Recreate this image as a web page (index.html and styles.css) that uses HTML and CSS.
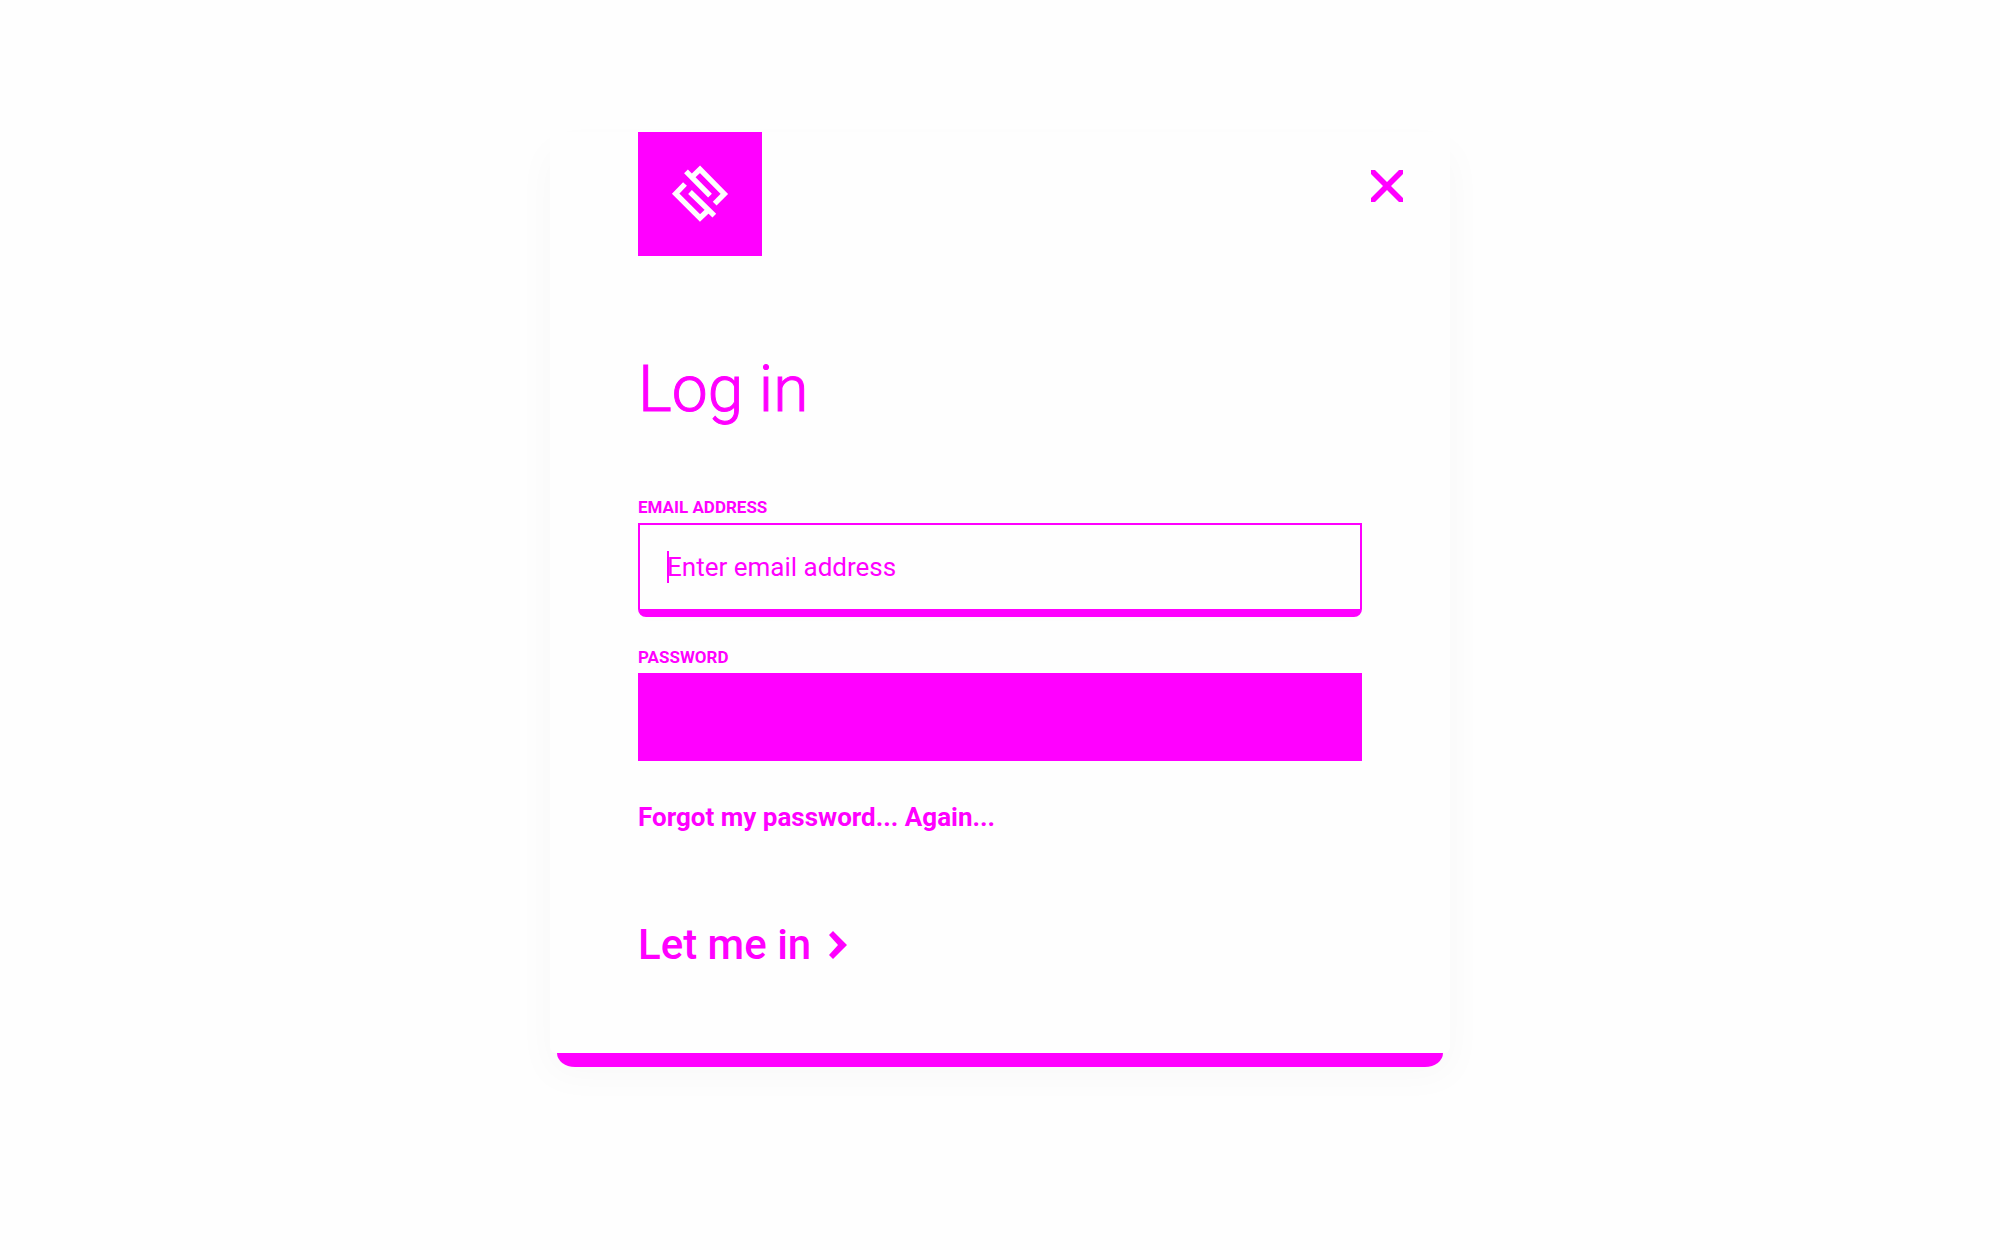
FILE: index.html
```html
<!DOCTYPE html>
<html lang="en">
<head>
<meta charset="utf-8">
<meta name="viewport" content="width=device-width, initial-scale=1">
<title>Log in</title>
<link rel="stylesheet" href="styles.css">
</head>
<body>
<main class="dialog">
  <div class="card">
    <header class="card-header">
      <svg class="logo" viewBox="0 0 372 372" role="img" aria-label="Logo">
        <path d="M144 118 216 191M164 133 186 112 259 186 230 215M156 180 229 251M141 156 113 185 186 258 208 237" fill="none" stroke="currentColor" stroke-width="16"/>
      </svg>
      <button class="close" type="button" aria-label="Close">
        <svg viewBox="0 0 32 32" width="32" height="32"><path d="M0 0H4L16 12 28 0H32V4L20 16 32 28V32H28L16 20 4 32H0V28L12 16 0 4Z" fill="currentColor"/></svg>
      </button>
    </header>
    <form class="form">
      <h1 class="title">Log in</h1>
      <div class="field">
        <label class="label" for="email">EMAIL ADDRESS</label>
        <div class="email-box">
          <input class="input input-email" id="email" type="email" placeholder="Enter email address">
          <span class="caret"></span>
        </div>
      </div>
      <div class="field">
        <label class="label" for="password">PASSWORD</label>
        <input class="input input-password" id="password" type="password">
      </div>
      <a class="forgot" href="#">Forgot my password... Again...</a>
      <button class="submit" type="submit">Let me in
        <svg viewBox="0 0 18 28" width="18" height="28"><path d="M0 4 4 0 18 14 4 28 0 24 9 14Z" fill="currentColor"/></svg>
      </button>
    </form>
  </div>
  <div class="card-edge"></div>
</main>
</body>
</html>
```
FILE: styles.css
```css
* { box-sizing: border-box; }

body {
  margin: 0;
  padding: 132px 24px;
  background: #fefefe;
  color: #f0f;
  font-family: Roboto, sans-serif;
}

.dialog {
  max-width: 900px;
  margin: 0 auto;
}

.card {
  position: relative;
  padding-bottom: 84px;
  background: #fefefe;
  border-radius: 0 0 6px 6px;
  box-shadow: 0 20px 40px rgba(0, 0, 0, 0.03);
}

.card-edge {
  position: relative;
  height: 14px;
  margin: 0 7px;
  background: #f0f;
  border-radius: 0 0 18px 18px / 0 0 14px 14px;
}

.card-header {
  display: flex;
  justify-content: space-between;
  padding: 0 47px 0 88px;
}

.logo {
  width: 124px;
  height: 124px;
  background: #f0f;
  color: #fefefe;
}

.close,
.submit {
  padding: 0;
  border: 0;
  background: none;
  color: inherit;
  font-family: inherit;
  cursor: pointer;
}

.close {
  height: 32px;
  margin-top: 38px;
}

.close svg { display: block; }

.form {
  display: flex;
  flex-direction: column;
  align-items: flex-start;
  padding: 98px 88px 0;
}

.title {
  margin: 0 0 71px;
  font-size: 64px;
  font-weight: 300;
  line-height: 72px;
  -webkit-text-stroke: 1px #f0f;
}

.field {
  width: 100%;
  margin-bottom: 30px;
}

.label {
  display: block;
  margin-bottom: 6px;
  font-size: 17px;
  font-weight: 700;
  line-height: 20px;
}

.email-box { position: relative; }

.input {
  display: block;
  width: 100%;
  height: 88px;
  padding: 0 27px;
  border: 0;
  border-radius: 0;
  outline: 0;
  background: #f0f;
  color: #fff;
  font-family: inherit;
  font-size: 26px;
}

.input-email {
  height: 94px;
  border: 2px solid #f0f;
  border-bottom-width: 8px;
  border-radius: 0 0 8px 8px;
  background: #fefefe;
  color: #f0f;
  box-shadow: 0 2px 10px rgba(0, 0, 0, 0.01);
}

.input-email::placeholder {
  color: #f0f;
  opacity: 1;
}

.caret {
  position: absolute;
  top: 28px;
  left: 29px;
  width: 2px;
  height: 32px;
  background: #f0f;
}

.forgot {
  margin-top: 10px;
  color: inherit;
  font-size: 26px;
  font-weight: 700;
  line-height: 32px;
  text-decoration: none;
}

.submit {
  display: flex;
  align-items: center;
  gap: 18px;
  margin-top: 88px;
  font-size: 42px;
  font-weight: 500;
  line-height: 48px;
}
```
